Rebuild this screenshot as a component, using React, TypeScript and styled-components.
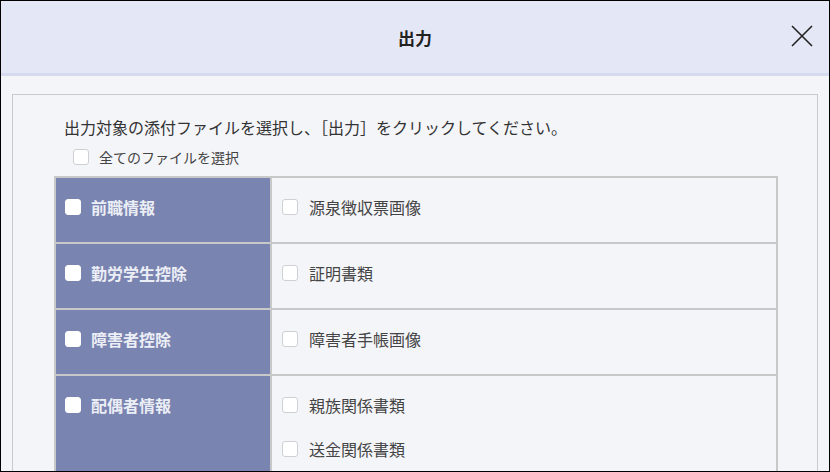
import React from "react";
import styled, { createGlobalStyle } from "styled-components";

const Global = createGlobalStyle`
  html, body { margin: 0; padding: 0; }
  body { font-family: "Noto Sans CJK JP", "Noto Sans", sans-serif; color: #333; }
  * { box-sizing: border-box; }
`;

const Frame = styled.div`
  width: 830px;
  height: 472px;
  border: 1px solid #000;
  overflow: hidden;
  display: flex;
  flex-direction: column;
  background: #f4f5f9;
`;

const Header = styled.header`
  position: relative;
  flex: 0 0 auto;
  height: 75px;
  background: #e4e7f6;
  border-bottom: 3px solid #d6daef;
  display: flex;
  align-items: center;
  justify-content: center;
`;

const Title = styled.h1`
  margin: 0;
  font-size: 17px;
  font-weight: 700;
  color: #222;
`;

const Close = styled.button`
  position: absolute;
  right: 14px;
  top: 22px;
  width: 26px;
  height: 26px;
  padding: 0;
  border: none;
  background: transparent;
  display: flex;
  align-items: center;
  justify-content: center;
`;

const Body = styled.main`
  flex: 1 1 auto;
  padding: 18px 11px 0 11px;
`;

const Panel = styled.section`
  border: 1px solid #c9cacd;
  border-bottom: none;
  height: 100%;
  padding: 20px 39px 0 41px;
`;

const Instruction = styled.p`
  margin: 0 0 0 10px;
  font-size: 16px;
  line-height: 24px;
  color: #333;
`;

const SelectAll = styled.label`
  display: flex;
  align-items: center;
  gap: 10px;
  height: 30px;
  margin: 3px 0 4px 19px;
  font-size: 14px;
  color: #444;
`;

const Box = styled.span<{ $onDark?: boolean }>`
  flex: 0 0 auto;
  width: 16px;
  height: 16px;
  border-radius: 3px;
  background: #fff;
  border: 1px solid ${(p) => (p.$onDark ? "#fff" : "#cfd0d4")};
`;

const Table = styled.div`
  border: 2px solid #c8c8c8;
  border-bottom: none;
  display: grid;
  grid-template-columns: 216px 1fr;
`;

const CategoryCell = styled.div`
  background: #7a84b0;
  border-right: 2px solid #c8c8c8;
  border-bottom: 2px solid #c8c8c8;
  padding: 7px 0 13px 9px;
`;

const FilesCell = styled.div`
  border-bottom: 2px solid #c8c8c8;
  padding: 7px 0 13px 10px;
  display: flex;
  flex-direction: column;
`;

const Item = styled.label<{ $onDark?: boolean }>`
  display: flex;
  align-items: center;
  gap: ${(p) => (p.$onDark ? "10px" : "11px")};
  height: 44px;
  font-size: 16px;
  font-weight: ${(p) => (p.$onDark ? 700 : 400)};
  color: ${(p) => (p.$onDark ? "#eceef6" : "#444")};
`;

const rows: { cat: string; files: string[] }[] = [
  { cat: "前職情報", files: ["源泉徴収票画像"] },
  { cat: "勤労学生控除", files: ["証明書類"] },
  { cat: "障害者控除", files: ["障害者手帳画像"] },
  { cat: "配偶者情報", files: ["親族関係書類", "送金関係書類"] },
];

export default function App() {
  return (
    <>
      <Global />
      <Frame>
        <Header>
          <Title>出力</Title>
          <Close aria-label="閉じる">
            <svg width="24" height="24" viewBox="0 0 24 24">
              <path d="M2 2 L22 22 M22 2 L2 22" stroke="#222" strokeWidth="1.6" fill="none" />
            </svg>
          </Close>
        </Header>
        <Body>
          <Panel>
            <Instruction>出力対象の添付ファイルを選択し、［出力］をクリックしてください。</Instruction>
            <SelectAll>
              <Box />
              全てのファイルを選択
            </SelectAll>
            <Table>
              {rows.map((r) => (
                <React.Fragment key={r.cat}>
                  <CategoryCell>
                    <Item $onDark>
                      <Box $onDark />
                      {r.cat}
                    </Item>
                  </CategoryCell>
                  <FilesCell>
                    {r.files.map((f) => (
                      <Item key={f}>
                        <Box />
                        {f}
                      </Item>
                    ))}
                  </FilesCell>
                </React.Fragment>
              ))}
            </Table>
          </Panel>
        </Body>
      </Frame>
    </>
  );
}
